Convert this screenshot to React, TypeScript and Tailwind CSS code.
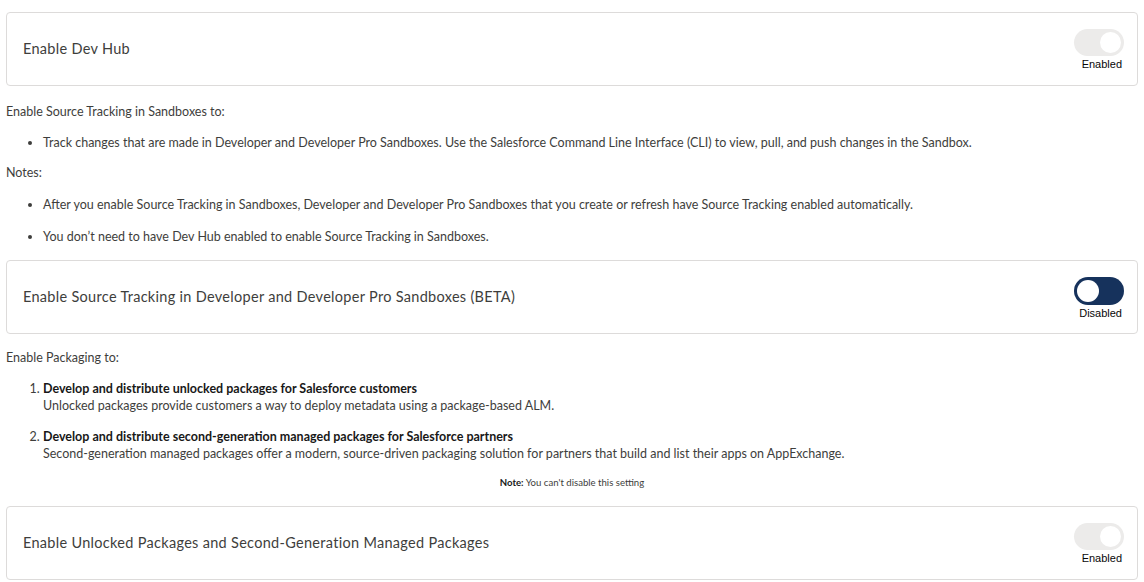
import React from "react";

const bodyFont = { fontFamily: "Lato, 'Open Sans', sans-serif" };

const Toggle = ({ on, disabled }: { on: boolean; disabled?: boolean }) => {
  return (
    <div className="flex flex-col items-end">
      {disabled ? (
        <div className="relative h-[27px] w-[50px] rounded-full bg-[#ecebea]">
          <div className="absolute right-[3px] top-[3px] h-[21px] w-[21px] rounded-full bg-white" />
        </div>
      ) : (
        <div className={`relative h-[28px] w-[50px] rounded-full ${on ? "bg-[#1b5297]" : "bg-[#16325c]"}`}>
          <div className="absolute left-[3px] top-[3px] h-[22px] w-[22px] rounded-full bg-white" />
        </div>
      )}
      <span className="mt-[2px] pr-[2px] text-[11px] leading-[13px] text-[#080707]" style={{ fontFamily: "'Liberation Sans', Arial, sans-serif" }}>
        {on ? "Enabled" : "Disabled"}
      </span>
    </div>
  );
};

const SettingCard = ({ title, on, disabled }: { title: string; on: boolean; disabled?: boolean }) => {
  return (
    <div className="flex h-[74px] items-center justify-between rounded-[4px] border border-[#dddbda] bg-white pl-4 pr-[13px]">
      <div className="text-[14.5px] tracking-[0.3px] text-[#3e3e3c]">{title}</div>
      <div className="pt-[2px]">
        <Toggle on={on} disabled={disabled} />
      </div>
    </div>
  );
};

export default function App() {
  return (
    <div className="min-h-screen bg-white px-[6px] pt-3 text-[12.5px] leading-[18px] text-[#3e3e3c]" style={bodyFont}>
      <SettingCard title="Enable Dev Hub" on disabled />

      <div className="pt-[17px] pb-[14px]">
        <p>Enable Source Tracking in Sandboxes to:</p>
        <ul className="mt-[13px] list-disc pl-[37px]">
          <li>
            Track changes that are made in Developer and Developer Pro Sandboxes. Use the Salesforce Command Line
            Interface (CLI) to view, pull, and push changes in the Sandbox.
          </li>
        </ul>
        <p className="mt-3">Notes:</p>
        <ul className="mt-[14px] list-disc space-y-[14px] pl-[37px]">
          <li>
            After you enable Source Tracking in Sandboxes, Developer and Developer Pro Sandboxes that you create or
            refresh have Source Tracking enabled automatically.
          </li>
          <li>You don’t need to have Dev Hub enabled to enable Source Tracking in Sandboxes.</li>
        </ul>
      </div>

      <SettingCard title="Enable Source Tracking in Developer and Developer Pro Sandboxes (BETA)" on={false} />

      <div className="pt-[15px]">
        <p>Enable Packaging to:</p>
        <ol className="mt-[13px] list-decimal space-y-[14px] pl-[37px] leading-[17px]">
          <li>
            <div className="font-bold text-[#181818]">Develop and distribute unlocked packages for Salesforce customers</div>
            <div>Unlocked packages provide customers a way to deploy metadata using a package-based ALM.</div>
          </li>
          <li>
            <div className="font-bold text-[#181818]">
              Develop and distribute second-generation managed packages for Salesforce partners
            </div>
            <div>
              Second-generation managed packages offer a modern, source-driven packaging solution for partners that
              build and list their apps on AppExchange.
            </div>
          </li>
        </ol>
        <p className="mt-[15px] pb-[17px] text-center text-[9.6px] leading-[12px]">
          <span className="font-bold text-[#181818]">Note:</span> You can't disable this setting
        </p>
      </div>

      <SettingCard title="Enable Unlocked Packages and Second-Generation Managed Packages" on disabled />
    </div>
  );
}
